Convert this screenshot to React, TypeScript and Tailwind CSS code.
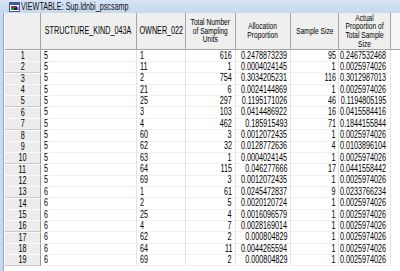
import React from "react";

const rows: [string, string, string, string, string, string][] = [
  ["5", "1", "616", "0.2478873239", "95", "0.2467532468"],
  ["5", "11", "1", "0.0004024145", "1", "0.0025974026"],
  ["5", "2", "754", "0.3034205231", "116", "0.3012987013"],
  ["5", "21", "6", "0.0024144869", "1", "0.0025974026"],
  ["5", "25", "297", "0.1195171026", "46", "0.1194805195"],
  ["5", "3", "103", "0.0414486922", "16", "0.0415584416"],
  ["5", "4", "462", "0.185915493", "71", "0.1844155844"],
  ["5", "60", "3", "0.0012072435", "1", "0.0025974026"],
  ["5", "62", "32", "0.0128772636", "4", "0.0103896104"],
  ["5", "63", "1", "0.0004024145", "1", "0.0025974026"],
  ["5", "64", "115", "0.046277666", "17", "0.0441558442"],
  ["5", "69", "3", "0.0012072435", "1", "0.0025974026"],
  ["6", "1", "61", "0.0245472837", "9", "0.0233766234"],
  ["6", "2", "5", "0.0020120724", "1", "0.0025974026"],
  ["6", "25", "4", "0.0016096579", "1", "0.0025974026"],
  ["6", "4", "7", "0.0028169014", "1", "0.0025974026"],
  ["6", "62", "2", "0.000804829", "1", "0.0025974026"],
  ["6", "64", "11", "0.0044265594", "1", "0.0025974026"],
  ["6", "69", "2", "0.000804829", "1", "0.0025974026"],
];

const cols = "grid grid-cols-[36px_96px_49px_50px_55px_48px_52px_1fr]";

function TL({ children }: { children: React.ReactNode }) {
  return <span className="inline-block whitespace-nowrap origin-left scale-x-[0.72]">{children}</span>;
}
function TR({ children }: { children: React.ReactNode }) {
  return <span className="inline-block whitespace-nowrap origin-right scale-x-[0.72]">{children}</span>;
}
function TC({ children }: { children: React.ReactNode }) {
  return <span className="inline-block whitespace-nowrap origin-center scale-x-[0.72]">{children}</span>;
}
function HC({ children }: { children: React.ReactNode }) {
  return (
    <span className="inline-block whitespace-nowrap origin-center scale-x-[0.78] text-center text-[8.5px] leading-[8.6px]">
      {children}
    </span>
  );
}

function Icon() {
  return (
    <svg width="11" height="10" viewBox="0 0 11 10" className="shrink-0">
      <rect x="0.5" y="0.5" width="10" height="9" fill="#ffffff" stroke="#3a5c9a" />
      <rect x="1" y="1" width="9" height="2" fill="#3a5c9a" />
      <rect x="2" y="4" width="3" height="2" fill="#d81e1e" />
      <rect x="5" y="4" width="3" height="2" fill="#2b3fd0" />
      <rect x="2" y="6" width="3" height="2" fill="#1d9a2a" />
      <rect x="5" y="6" width="3" height="2" fill="#222222" />
      <rect x="8" y="5" width="1.5" height="3" fill="#a02aa0" />
    </svg>
  );
}

const hcell = "bg-[#efefef] border-r border-[#a5a5a5] flex items-center justify-center";
const dcell = "border-r border-[#e4e4e4] border-b border-b-[#f0f0f0] flex items-center";

export default function App() {
  return (
    <div
      className="w-[400px] h-[271px] overflow-hidden bg-white text-black flex flex-col"
      style={{ fontFamily: '"Liberation Sans", Arial, sans-serif' }}
    >
      {/* title bar */}
      <div className="h-[13px] shrink-0 bg-gradient-to-b from-[#d6e4f5] to-[#c6d8ef] flex items-center pl-[9px] gap-[1px]">
        <Icon />
        <span className="text-[10px] leading-[10px] text-[#111]">
          <TL>VIEWTABLE: Sup.ldnbi_pscsamp</TL>
        </span>
      </div>
      <div className="flex flex-1 min-h-0">
        {/* left frame strip */}
        <div className="w-[5px] shrink-0 flex">
          <div className="w-[3px] bg-[#c8daf0]" />
          <div className="w-[1px] bg-[#91a9c9]" />
          <div className="w-[1px] bg-white" />
        </div>
        <div className="flex-1 flex flex-col min-w-0">
          {/* header */}
          <div className={`${cols} h-[37px] border-b border-[#a5a5a5]`}>
            <div className="bg-[#efefef] border-r border-[#a5a5a5]" />
            <div className={`${hcell} text-[10px] leading-[10px]`}>
              <TC>STRUCTURE_KIND_043A</TC>
            </div>
            <div className={`${hcell} text-[10px] leading-[10px]`}>
              <TC>OWNER_022</TC>
            </div>
            <div className={hcell}>
              <HC>
                Total Number
                <br />
                of Sampling
                <br />
                Units
              </HC>
            </div>
            <div className={hcell}>
              <HC>
                Allocation
                <br />
                Proportion
              </HC>
            </div>
            <div className={hcell}>
              <HC>Sample Size</HC>
            </div>
            <div className={hcell}>
              <HC>
                Actual
                <br />
                Proportion of
                <br />
                Total Sample
                <br />
                Size
              </HC>
            </div>
            <div className="bg-[#f6f6f6]" />
          </div>
          {/* rows */}
          <div className="flex flex-col text-[10px] leading-[10px]">
            {rows.map((r, i) => (
              <div key={i} className={`${cols} h-[11.37px]`}>
                <div className="bg-[#ececec] border-r border-[#9c9c9c] border-b border-b-[#c9c9c9] border-t border-t-[#fbfbfb] flex items-center justify-center">
                  <TC>{i + 1}</TC>
                </div>
                <div className={`${dcell} pl-[3px]`}>
                  <TL>{r[0]}</TL>
                </div>
                <div className={`${dcell} pl-[3px]`}>
                  <TL>{r[1]}</TL>
                </div>
                <div className={`${dcell} justify-end pr-[3px]`}>
                  <TR>{r[2]}</TR>
                </div>
                <div className={`${dcell} justify-end pr-[3px]`}>
                  <TR>{r[3]}</TR>
                </div>
                <div className={`${dcell} justify-end pr-[2px]`}>
                  <TR>{r[4]}</TR>
                </div>
                <div className={`${dcell} justify-end pr-[4px]`}>
                  <TR>{r[5]}</TR>
                </div>
                <div />
              </div>
            ))}
          </div>
        </div>
      </div>
    </div>
  );
}
